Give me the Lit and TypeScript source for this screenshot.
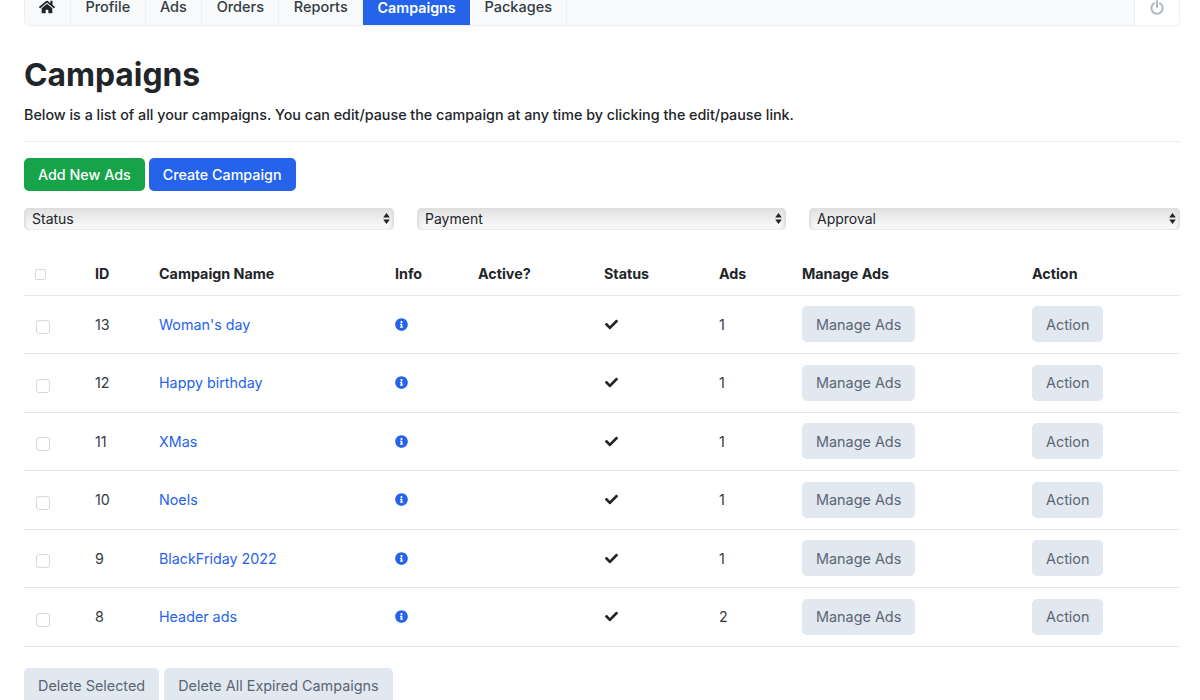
import { LitElement, html, css, svg } from "lit";
import { customElement } from "lit/decorators.js";

const HOME = "M280.37 148.26L96 300.11V464a16 16 0 0 0 16 16l112.06-.29a16 16 0 0 0 15.92-16V368a16 16 0 0 1 16-16h64a16 16 0 0 1 16 16v95.64a16 16 0 0 0 16 16.05L464 480a16 16 0 0 0 16-16V300L295.67 148.26a12.19 12.19 0 0 0-15.3 0zM571.6 251.47L488 182.56V44.05a12 12 0 0 0-12-12h-56a12 12 0 0 0-12 12v72.61L318.47 43a48 48 0 0 0-61 0L4.34 251.47a12 12 0 0 0-1.6 16.9l25.5 31A12 12 0 0 0 45.15 301l235.22-193.74a12.19 12.19 0 0 1 15.3 0L530.9 301a12 12 0 0 0 16.9-1.6l25.5-31a12 12 0 0 0-1.7-16.93z";
const INFO = "M256 8C119.043 8 8 119.083 8 256c0 136.997 111.043 248 248 248s248-111.003 248-248C504 119.083 392.957 8 256 8zm0 110c23.196 0 42 18.804 42 42s-18.804 42-42 42-42-18.804-42-42 18.804-42 42-42zm56 254c0 6.627-5.373 12-12 12h-88c-6.627 0-12-5.373-12-12v-24c0-6.627 5.373-12 12-12h12v-64h-12c-6.627 0-12-5.373-12-12v-24c0-6.627 5.373-12 12-12h64c6.627 0 12 5.373 12 12v100h12c6.627 0 12 5.373 12 12v24z";
const CHECK = "M173.898 439.404l-166.4-166.4c-9.997-9.997-9.997-26.206 0-36.204l36.203-36.204c9.997-9.998 26.207-9.998 36.204 0L192 312.69 432.095 72.596c9.997-9.997 26.207-9.997 36.204 0l36.203 36.204c9.997 9.997 9.997 26.206 0 36.204l-294.4 294.401c-9.998 9.997-26.207 9.997-36.204-.001z";

const rows = [
  { id: 13, name: "Woman's day", ads: 1 },
  { id: 12, name: "Happy birthday", ads: 1 },
  { id: 11, name: "XMas", ads: 1 },
  { id: 10, name: "Noels", ads: 1 },
  { id: 9, name: "BlackFriday 2022", ads: 1 },
  { id: 8, name: "Header ads", ads: 2 },
];
const navItems = ["Profile", "Ads", "Orders", "Reports", "Campaigns", "Packages"];

@customElement("app-root")
export class AppRoot extends LitElement {
  static styles = css`
    :host {
      display: block;
      height: 700px;
      overflow: hidden;
      background: #fff;
      color: #212529;
      font-family: Inter, "Liberation Sans", sans-serif;
      font-size: 14.3px;
    }
    .page { padding: 0 20px 0 24px; }
    .nav {
      display: flex;
      height: 37px;
      margin-top: -11px;
      padding-bottom: 1px;
      background: #f8fafc;
      border: 1px solid #eef1f4;
      border-top: 0;
      border-radius: 0 0 5px 5px;
      box-shadow: 0 1px 2px rgba(0,0,0,.02);
      box-sizing: border-box;
    }
    .nav a {
      display: flex;
      align-items: center;
      padding: 0 14.4px;
      border-right: 1px solid #edf0f3;
      font-weight: 500;
      font-size: 14.5px;
      color: #343a40;
    }
    .nav a.home { width: 46px; box-sizing: border-box; justify-content: center; padding: 0 1px 0 0; color: #212529; }
    .nav a.active { background: #2563eb; color: #fff; font-weight: 600; border-right: 0; margin-bottom: -1px; font-size: 14.3px; }
    .nav .power {
      margin-left: auto;
      width: 44px;
      margin-bottom: -1px;
      background: #fff;
      border-left: 1px solid #edf0f3;
      border-radius: 0 0 5px 0;
      display: flex;
      align-items: center;
      justify-content: center;
    }
    h1 {
      margin: 30px 0 0;
      font-size: 31.8px;
      line-height: 38px;
      font-weight: 700;
      color: #212529;
    }
    .lead {
      margin: 10px 0 0;
      font-size: 14.32px;
      line-height: 22px;
      font-weight: 500;
    }
    .rule { height: 1px; background: #eceef0; margin-top: 15px; }
    .actions { display: flex; gap: 4px; margin-top: 16px; }
    .btn {
      display: inline-flex;
      align-items: center;
      justify-content: center;
      height: 33px;
      padding: 0 14px;
      border-radius: 5px;
      font-size: 14.3px;
      font-weight: 500;
      color: #fff;
      box-sizing: border-box;
      white-space: nowrap;
    }
    .green { background: #16a34a; }
    .blue { background: #2563eb; }
    .gray { background: #e2e8f0; color: #5b6675; height: 36px; font-weight: 400; font-size: 14.4px; }
    .filters {
      display: grid;
      grid-template-columns: 369.5px 368.5px 371px;
      column-gap: 23.5px;
      margin-top: 17px;
    }
    .select {
      position: relative;
      height: 22px;
      display: block;
    }
    select {
      appearance: none;
      -webkit-appearance: none;
      width: 100%;
      height: 100%;
      border: 0;
      border-radius: 5px;
      padding: 0 0 2px 8px;
      margin: 0;
      box-sizing: border-box;
      font: 14px Inter, "Liberation Sans", sans-serif;
      color: #212529;
      background: linear-gradient(#dfdfdf, #f0f0f0 55%, #fafafa);
      box-shadow: inset 2px 0 2px #dedede, inset -2px 0 2px #dedede;
      display: block;
    }
    .arrows { position: absolute; right: 4px; top: 4px; pointer-events: none; }
    table {
      width: 1156px;
      table-layout: fixed;
      border-collapse: collapse;
      margin-top: 20px;
    }
    th, td {
      padding: 0 14px;
      text-align: left;
      vertical-align: middle;
      border-bottom: 1px solid #e5e8ec;
    }
    th { height: 45px; box-sizing: border-box; padding-top: 2px; font-weight: 700; font-size: 14.3px; color: #212529; }
    td { height: 58.5px; box-sizing: border-box; font-size: 14.3px; color: #343a40; }
    td svg, th svg { display: block; }
    .cb {
      display: block;
      width: 14px;
      height: 14px;
      margin: 6px 0 0 -2px;
      border: 1px solid #d6d8da;
      border-radius: 3px;
      background: #fff;
      box-sizing: border-box;
    }
    th .cb { width: 11px; height: 11px; margin: 2px 0 0 -3px; border-radius: 2px; }
    td a { color: #2563eb; }
    .check { display: block; margin-left: 1px; }
    .bottom { display: flex; gap: 5px; margin-top: 21px; }
  `;

  private icon(d: string, size: number, fill: string, vb = "0 0 512 512") {
    return html`<svg width=${size} height=${size} viewBox=${vb} fill=${fill}>${svg`<path d=${d}></path>`}</svg>`;
  }

  private sel(label: string) {
    return html`<label class="select">
      <select aria-label=${label}><option>${label}</option></select>
      <svg class="arrows" width="7" height="13" viewBox="0 0 7 13" fill="#222">
        <path d="M3.5 1 L6.8 5.6 H.2 Z M3.5 12 L.2 7.4 H6.8 Z"></path>
      </svg>
    </label>`;
  }

  render() {
    return html`<div class="page">
      <nav class="nav">
        <a class="home">${this.icon(HOME, 16, "#212529", "0 0 576 512")}</a>
        ${navItems.map((n) => html`<a class=${n === "Campaigns" ? "active" : ""}>${n}</a>`)}
        <div class="power">
          <svg width="14" height="15" viewBox="0 0 14 15" fill="none" stroke="#aeb6bf" stroke-width="2" stroke-linecap="round">
            <path d="M4 3.4 A5.6 5.6 0 1 0 10 3.4"></path><path d="M7 1 V7"></path>
          </svg>
        </div>
      </nav>
      <h1>Campaigns</h1>
      <p class="lead">Below is a list of all your campaigns. You can edit/pause the campaign at any time by clicking the edit/pause link.</p>
      <div class="rule"></div>
      <div class="actions">
        <span class="btn green">Add New Ads</span>
        <span class="btn blue">Create Campaign</span>
      </div>
      <div class="filters">${this.sel("Status")}${this.sel("Payment")}${this.sel("Approval")}</div>
      <table>
        <colgroup>
          <col style="width:57px" /><col style="width:64px" /><col style="width:236px" />
          <col style="width:83px" /><col style="width:126px" /><col style="width:115px" />
          <col style="width:83px" /><col style="width:230px" /><col style="width:162px" />
        </colgroup>
        <thead>
          <tr>
            <th><span class="cb"></span></th><th>ID</th><th>Campaign Name</th><th>Info</th><th>Active?</th>
            <th>Status</th><th>Ads</th><th>Manage Ads</th><th>Action</th>
          </tr>
        </thead>
        <tbody>
          ${rows.map((r) => html`<tr>
            <td><span class="cb"></span></td>
            <td>${r.id}</td>
            <td><a>${r.name}</a></td>
            <td>${this.icon(INFO, 13, "#2563eb")}</td>
            <td></td>
            <td><span class="check">${this.icon(CHECK, 13, "#212529")}</span></td>
            <td>${r.ads}</td>
            <td><span class="btn gray">Manage Ads</span></td>
            <td><span class="btn gray">Action</span></td>
          </tr>`)}
        </tbody>
      </table>
      <div class="bottom">
        <span class="btn gray">Delete Selected</span>
        <span class="btn gray">Delete All Expired Campaigns</span>
      </div>
    </div>`;
  }
}
